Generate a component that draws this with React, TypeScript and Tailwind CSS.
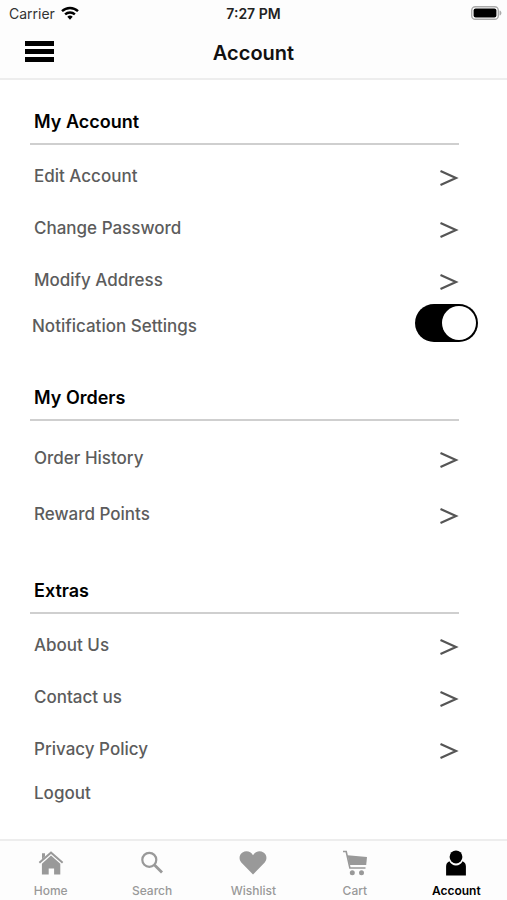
import { useState } from "react";

type Tab = "Home" | "Search" | "Wishlist" | "Cart" | "Account";

const TABS: Tab[] = ["Home", "Search", "Wishlist", "Cart", "Account"];

const TabIcon = ({ name }: { name: Tab }) => {
  switch (name) {
    case "Home":
      return (
        <svg viewBox="0 0 26 26" className="size-[26px]" fill="currentColor" aria-hidden="true">
          <path d="M4 3.200h3v3L4 9zM13 1.200l12.300 10.700-1.300 1.600L13 3.900 2 13.500.7 11.900z" />
          <path d="M13 5.600l9.300 8.100V24.600h-6.200v-6h-5.400v6H3.900V13.700z" />
        </svg>
      );
    case "Search":
      return (
        <svg viewBox="0 0 26 26" className="size-[26px]" fill="none" stroke="currentColor" aria-hidden="true">
          <circle cx="10.300" cy="9.800" r="7" strokeWidth="2.200" />
          <path d="M15.500 15l7.500 7.500" strokeWidth="2.800" />
        </svg>
      );
    case "Wishlist":
      return (
        <svg viewBox="0 0 28 26" className="h-[26px] w-[28px]" fill="currentColor" aria-hidden="true">
          <path d="M14 24.500L2.300 12.500C-.5 9 .2 4.500 3.500 2.500 7.300.2 12 1.500 14 5.300 16 1.500 20.700.2 24.500 2.500c3.300 2 4 6.500 1.200 10z" />
        </svg>
      );
    case "Cart":
      return (
        <svg viewBox="0 0 26 26" className="size-[26px]" fill="currentColor" aria-hidden="true">
          <path d="M5.600 5.300L25 6.900l-.8 8H7.600z" />
          <path d="M1 1.500h3.200L7.900 18H23.500" fill="none" stroke="currentColor" strokeWidth="1.600" />
          <circle cx="10.300" cy="22.800" r="2.500" />
          <circle cx="19.500" cy="22.800" r="2.500" />
        </svg>
      );
    case "Account":
      return (
        <svg viewBox="0 0 26 26" className="size-[26px]" fill="currentColor" aria-hidden="true">
          <ellipse cx="13" cy="6.900" rx="6.400" ry="6.500" />
          <path d="M6.400 11.200c1.200 2.600 3.600 4.200 6.600 4.200s5.400-1.600 6.600-4.200c2.200 1 3.300 2.800 3.300 5.300v9H3.100v-9c0-2.500 1.100-4.300 3.300-5.300z" />
        </svg>
      );
  }
};

const StatusBar = () => (
  <div className="grid h-7 grid-cols-3 items-center px-[9px] text-sm">
    <div className="flex items-center gap-[6px] text-[#333]">
      <span>Carrier</span>
      <svg viewBox="0 0 18 14" className="mb-[2px] h-[14px] w-[18px] text-black" fill="none" stroke="currentColor" strokeWidth="2.400" aria-hidden="true">
        <path d="M1 5.200a11.600 11.600 0 0 1 16 0" />
        <path d="M4.100 8.400a7.200 7.200 0 0 1 9.800 0" />
        <path d="M6.300 10.800L9 13.700l2.700-2.900a4 4 0 0 0-5.400 0z" fill="currentColor" stroke="none" />
      </svg>
    </div>
    <div className="text-center font-semibold text-[#222]">7:27 PM</div>
    <svg viewBox="0 0 31 14" className="-mr-1 mb-[2px] h-[14px] w-[31px] justify-self-end" aria-hidden="true">
      <rect x="0.700" y="0.700" width="26.600" height="12.600" rx="3.600" fill="#fff" stroke="#aaa" strokeWidth="1.400" />
      <rect x="2.600" y="2.600" width="22.800" height="8.800" rx="2" />
      <path d="M28.500 4.500c2.600.6 2.600 4.400 0 5z" fill="#aaa" />
    </svg>
  </div>
);

const SectionTitle = ({ children }: { children: string }) => (
  <h2 className="mr-12 ml-[30px] border-b-2 border-[#cfcfcf] pb-[9px] pl-1 text-lg leading-6 font-semibold text-black">
    {children}
  </h2>
);

const Row = ({ label, tall = false }: { label: string; tall?: boolean }) => (
  <li>
    <a href="#" className={`flex items-center justify-between pr-12 pl-[34px] ${tall ? "h-14" : "h-[52px]"}`}>
      <span>{label}</span>
      <svg viewBox="0 0 20 20" className="mt-1 size-5" fill="none" stroke="#555" strokeWidth="2.200" aria-hidden="true">
        <path d="M1.500 3L17 10 1.500 17" />
      </svg>
    </a>
  </li>
);

const App = () => {
  const [active, setActive] = useState<Tab>("Account");
  const [notify, setNotify] = useState(true);

  return (
    <div className="flex min-h-screen flex-col bg-white font-['Inter',sans-serif] text-[17px] leading-6 font-medium text-[#5c5c5c]">
      <header className="border-b-2 border-[#ededed] bg-[#fdfdfd] font-normal">
        <StatusBar />
        <div className="grid h-[50px] grid-cols-3 items-center px-[25px]">
          <button type="button" aria-label="Open menu" className="mb-1 flex w-[29px] flex-col gap-[3px]">
            <span className="h-[5px] bg-black" />
            <span className="h-[5px] bg-black" />
            <span className="h-[5px] bg-black" />
          </button>
          <h1 className="text-center text-xl font-semibold text-[#111]">Account</h1>
        </div>
      </header>

      <main className="flex-1 pt-[30px]">
        <section>
          <SectionTitle>My Account</SectionTitle>
          <ul className="pt-[5px]">
            <Row label="Edit Account" />
            <Row label="Change Password" />
            <Row label="Modify Address" />
            <li className="flex h-10 items-center justify-between pr-[29px] pl-8">
              <label htmlFor="notify">Notification Settings</label>
              <input
                id="notify"
                type="checkbox"
                role="switch"
                checked={notify}
                onChange={e => setNotify(e.target.checked)}
                className="mb-[6px] flex h-[38px] w-[63px] appearance-none items-center rounded-full bg-gray-400 p-[2px] before:size-[34px] before:rounded-full before:bg-white before:content-[''] checked:justify-end checked:bg-black"
              />
            </li>
          </ul>
        </section>

        <section className="pt-10">
          <SectionTitle>My Orders</SectionTitle>
          <ul className="pt-[9px]">
            <Row label="Order History" tall />
            <Row label="Reward Points" tall />
          </ul>
        </section>

        <section className="pt-[37px]">
          <SectionTitle>Extras</SectionTitle>
          <ul className="pt-[5px]">
            <Row label="About Us" />
            <Row label="Contact us" />
            <Row label="Privacy Policy" />
            <li className="flex h-9 items-center pl-[34px]">
              <button type="button">Logout</button>
            </li>
          </ul>
        </section>
      </main>

      <nav className="grid h-[61px] grid-cols-5 border-t-2 border-[#ededed] bg-[#fdfdfd]" aria-label="Main">
        {TABS.map(tab => (
          <button
            key={tab}
            type="button"
            onClick={() => setActive(tab)}
            aria-current={active === tab ? "page" : undefined}
            className={`flex flex-col items-center gap-[7px] pt-[9px] text-xs ${active === tab ? "font-semibold text-black" : "text-[#999]"}`}
          >
            <TabIcon name={tab} />
            <span>{tab}</span>
          </button>
        ))}
      </nav>
    </div>
  );
};

export default App;
